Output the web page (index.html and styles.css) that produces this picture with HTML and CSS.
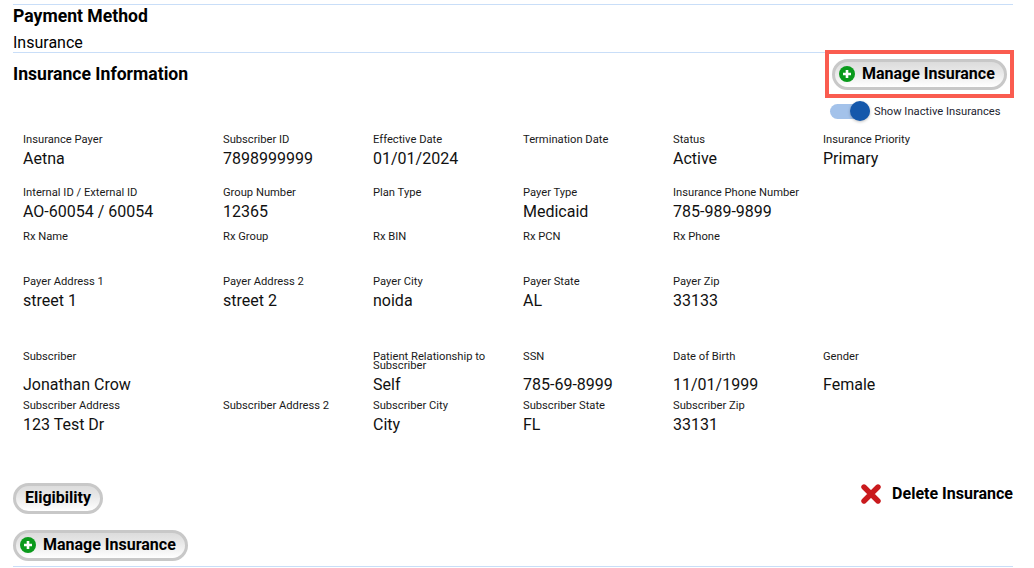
FILE: index.html
```html
<!DOCTYPE html>
<html lang="en">
<head>
<meta charset="utf-8">
<title>Insurance</title>
<link rel="stylesheet" href="styles.css">
</head>
<body>
<main class="page">
  <section class="payment">
    <h2 class="heading">Payment Method</h2>
    <p class="payment-value">Insurance</p>
  </section>
  <section class="insurance">
    <div class="insurance-head">
      <h2 class="heading">Insurance Information</h2>
      <div class="actions">
        <div class="highlight">
          <button class="pill" type="button">
            <svg class="plus" viewBox="0 0 16 16" aria-hidden="true"><circle cx="8" cy="8" r="8" fill="#0a9a1c"/><path d="M8 4v8M4 8h8" stroke="#fff" stroke-width="2.6"/></svg>
            Manage Insurance
          </button>
        </div>
        <div class="toggle-row">
          <span class="toggle"><span class="knob"></span></span>
          <span class="toggle-label">Show Inactive Insurances</span>
        </div>
      </div>
    </div>
    <div class="fields">
      <div class="field"><div class="label">Insurance Payer</div><div class="value">Aetna</div></div>
      <div class="field"><div class="label">Subscriber ID</div><div class="value">7898999999</div></div>
      <div class="field"><div class="label">Effective Date</div><div class="value">01/01/2024</div></div>
      <div class="field"><div class="label">Termination Date</div></div>
      <div class="field"><div class="label">Status</div><div class="value">Active</div></div>
      <div class="field"><div class="label">Insurance Priority</div><div class="value">Primary</div></div>

      <div class="field"><div class="label">Internal ID / External ID</div><div class="value">AO-60054 / 60054</div></div>
      <div class="field"><div class="label">Group Number</div><div class="value">12365</div></div>
      <div class="field"><div class="label">Plan Type</div></div>
      <div class="field"><div class="label">Payer Type</div><div class="value">Medicaid</div></div>
      <div class="field"><div class="label">Insurance Phone Number</div><div class="value">785-989-9899</div></div>
      <div class="field"></div>

      <div class="field"><div class="label">Rx Name</div></div>
      <div class="field"><div class="label">Rx Group</div></div>
      <div class="field"><div class="label">Rx BIN</div></div>
      <div class="field"><div class="label">Rx PCN</div></div>
      <div class="field"><div class="label">Rx Phone</div></div>
      <div class="field"></div>

      <div class="field"><div class="label">Payer Address 1</div><div class="value">street 1</div></div>
      <div class="field"><div class="label">Payer Address 2</div><div class="value">street 2</div></div>
      <div class="field"><div class="label">Payer City</div><div class="value">noida</div></div>
      <div class="field"><div class="label">Payer State</div><div class="value">AL</div></div>
      <div class="field"><div class="label">Payer Zip</div><div class="value">33133</div></div>
      <div class="field"></div>

      <div class="field tall"><div class="label">Subscriber</div><div class="value">Jonathan Crow</div></div>
      <div class="field tall"></div>
      <div class="field tall"><div class="label">Patient Relationship to Subscriber</div><div class="value">Self</div></div>
      <div class="field tall"><div class="label">SSN</div><div class="value">785-69-8999</div></div>
      <div class="field tall"><div class="label">Date of Birth</div><div class="value">11/01/1999</div></div>
      <div class="field tall"><div class="label">Gender</div><div class="value">Female</div></div>

      <div class="field"><div class="label">Subscriber Address</div><div class="value">123 Test Dr</div></div>
      <div class="field"><div class="label">Subscriber Address 2</div></div>
      <div class="field"><div class="label">Subscriber City</div><div class="value">City</div></div>
      <div class="field"><div class="label">Subscriber State</div><div class="value">FL</div></div>
      <div class="field"><div class="label">Subscriber Zip</div><div class="value">33131</div></div>
      <div class="field"></div>
    </div>
    <div class="footer">
      <div class="footer-buttons">
        <button class="pill" type="button">Eligibility</button>
        <button class="pill" type="button">
          <svg class="plus" viewBox="0 0 16 16" aria-hidden="true"><circle cx="8" cy="8" r="8" fill="#0a9a1c"/><path d="M8 4v8M4 8h8" stroke="#fff" stroke-width="2.6"/></svg>
          Manage Insurance
        </button>
      </div>
      <div class="delete">
        <svg class="cross" viewBox="0 0 20 20" aria-hidden="true"><path d="M3 3 17 17M17 3 3 17" stroke="#c91a1d" stroke-width="5.4" stroke-linecap="round"/></svg>
        <span>Delete Insurance</span>
      </div>
    </div>
  </section>
</main>
</body>
</html>
```
FILE: styles.css
```css
* { box-sizing: border-box; }
html, body { margin: 0; padding: 0; background: #fff; }
body { font-family: Roboto, "Liberation Sans", sans-serif; color: #000; overflow: hidden; }
.page { width: 1034px; height: 568px; padding: 4px 21px 0 13px; }
.payment { border-top: 1px solid #c9def8; height: 48px; display: flex; flex-direction: column; }
.heading { margin: 0; font-size: 17.6px; line-height: 22px; font-weight: 700; }
.payment-value { margin: 6px 0 0; font-size: 16px; line-height: 19px; }
.insurance { border-top: 1px solid #c9def8; height: 515px; border-bottom: 1px solid #c9def8; display: flex; flex-direction: column; }
.insurance-head { height: 82px; display: flex; justify-content: space-between; align-items: flex-start; }
.insurance-head .heading { margin-top: 10px; }
.actions { display: flex; flex-direction: column; align-items: flex-start; margin-top: -3px; margin-right: -1px; }
.highlight { width: 189px; height: 48px; border: 4px solid #fa5c50; padding: 5px 3px 0; background: #fff; }
.pill { display: inline-flex; align-items: center; gap: 7px; height: 31px; padding: 0 9px 2px 4px; border: 3px solid #c8c8c8; border-radius: 16px; background: linear-gradient(#dcdcdc, #e8e8e8 40%, #fff); font: 700 16px/19px Roboto, "Liberation Sans", sans-serif; color: #000; white-space: nowrap; }
.plus { width: 16px; height: 16px; flex: none; }
.toggle-row { display: flex; align-items: center; gap: 4px; margin: 3px 0 0 5px; height: 20px; }
.toggle { position: relative; width: 40px; height: 15px; border-radius: 8px; background: #a3c2ea; }
.knob { position: absolute; right: 0; top: -2.5px; width: 20px; height: 20px; border-radius: 50%; background: #1558ab; box-shadow: 0 1px 3px rgba(0,0,0,.25); }
.toggle-label { font-size: 11.2px; line-height: 13px; color: #1c2530; }
.fields { margin-left: 10px; display: grid; grid-template-columns: 200px repeat(4, 150px) 1fr; grid-template-rows: 53px 44px 45px 75px 49px 80px; }
.field { display: flex; flex-direction: column; }
.label { font-size: 11.2px; line-height: 9px; margin-bottom: 5px; color: #1a1a1a; }
.tall .label { min-height: 18px; }
.value { font-size: 16px; line-height: 19px; color: #111; }
.footer { flex: 1; display: flex; justify-content: space-between; align-items: flex-start; }
.footer-buttons { display: flex; flex-direction: column; align-items: flex-start; gap: 16px; margin-top: 2px; }
.footer-buttons .pill:first-child { padding: 0 9px 2px; }
.delete { display: flex; align-items: center; gap: 11px; margin-top: 3px; font-size: 16px; font-weight: 700; line-height: 20px; }
.cross { width: 20px; height: 20px; }
```
